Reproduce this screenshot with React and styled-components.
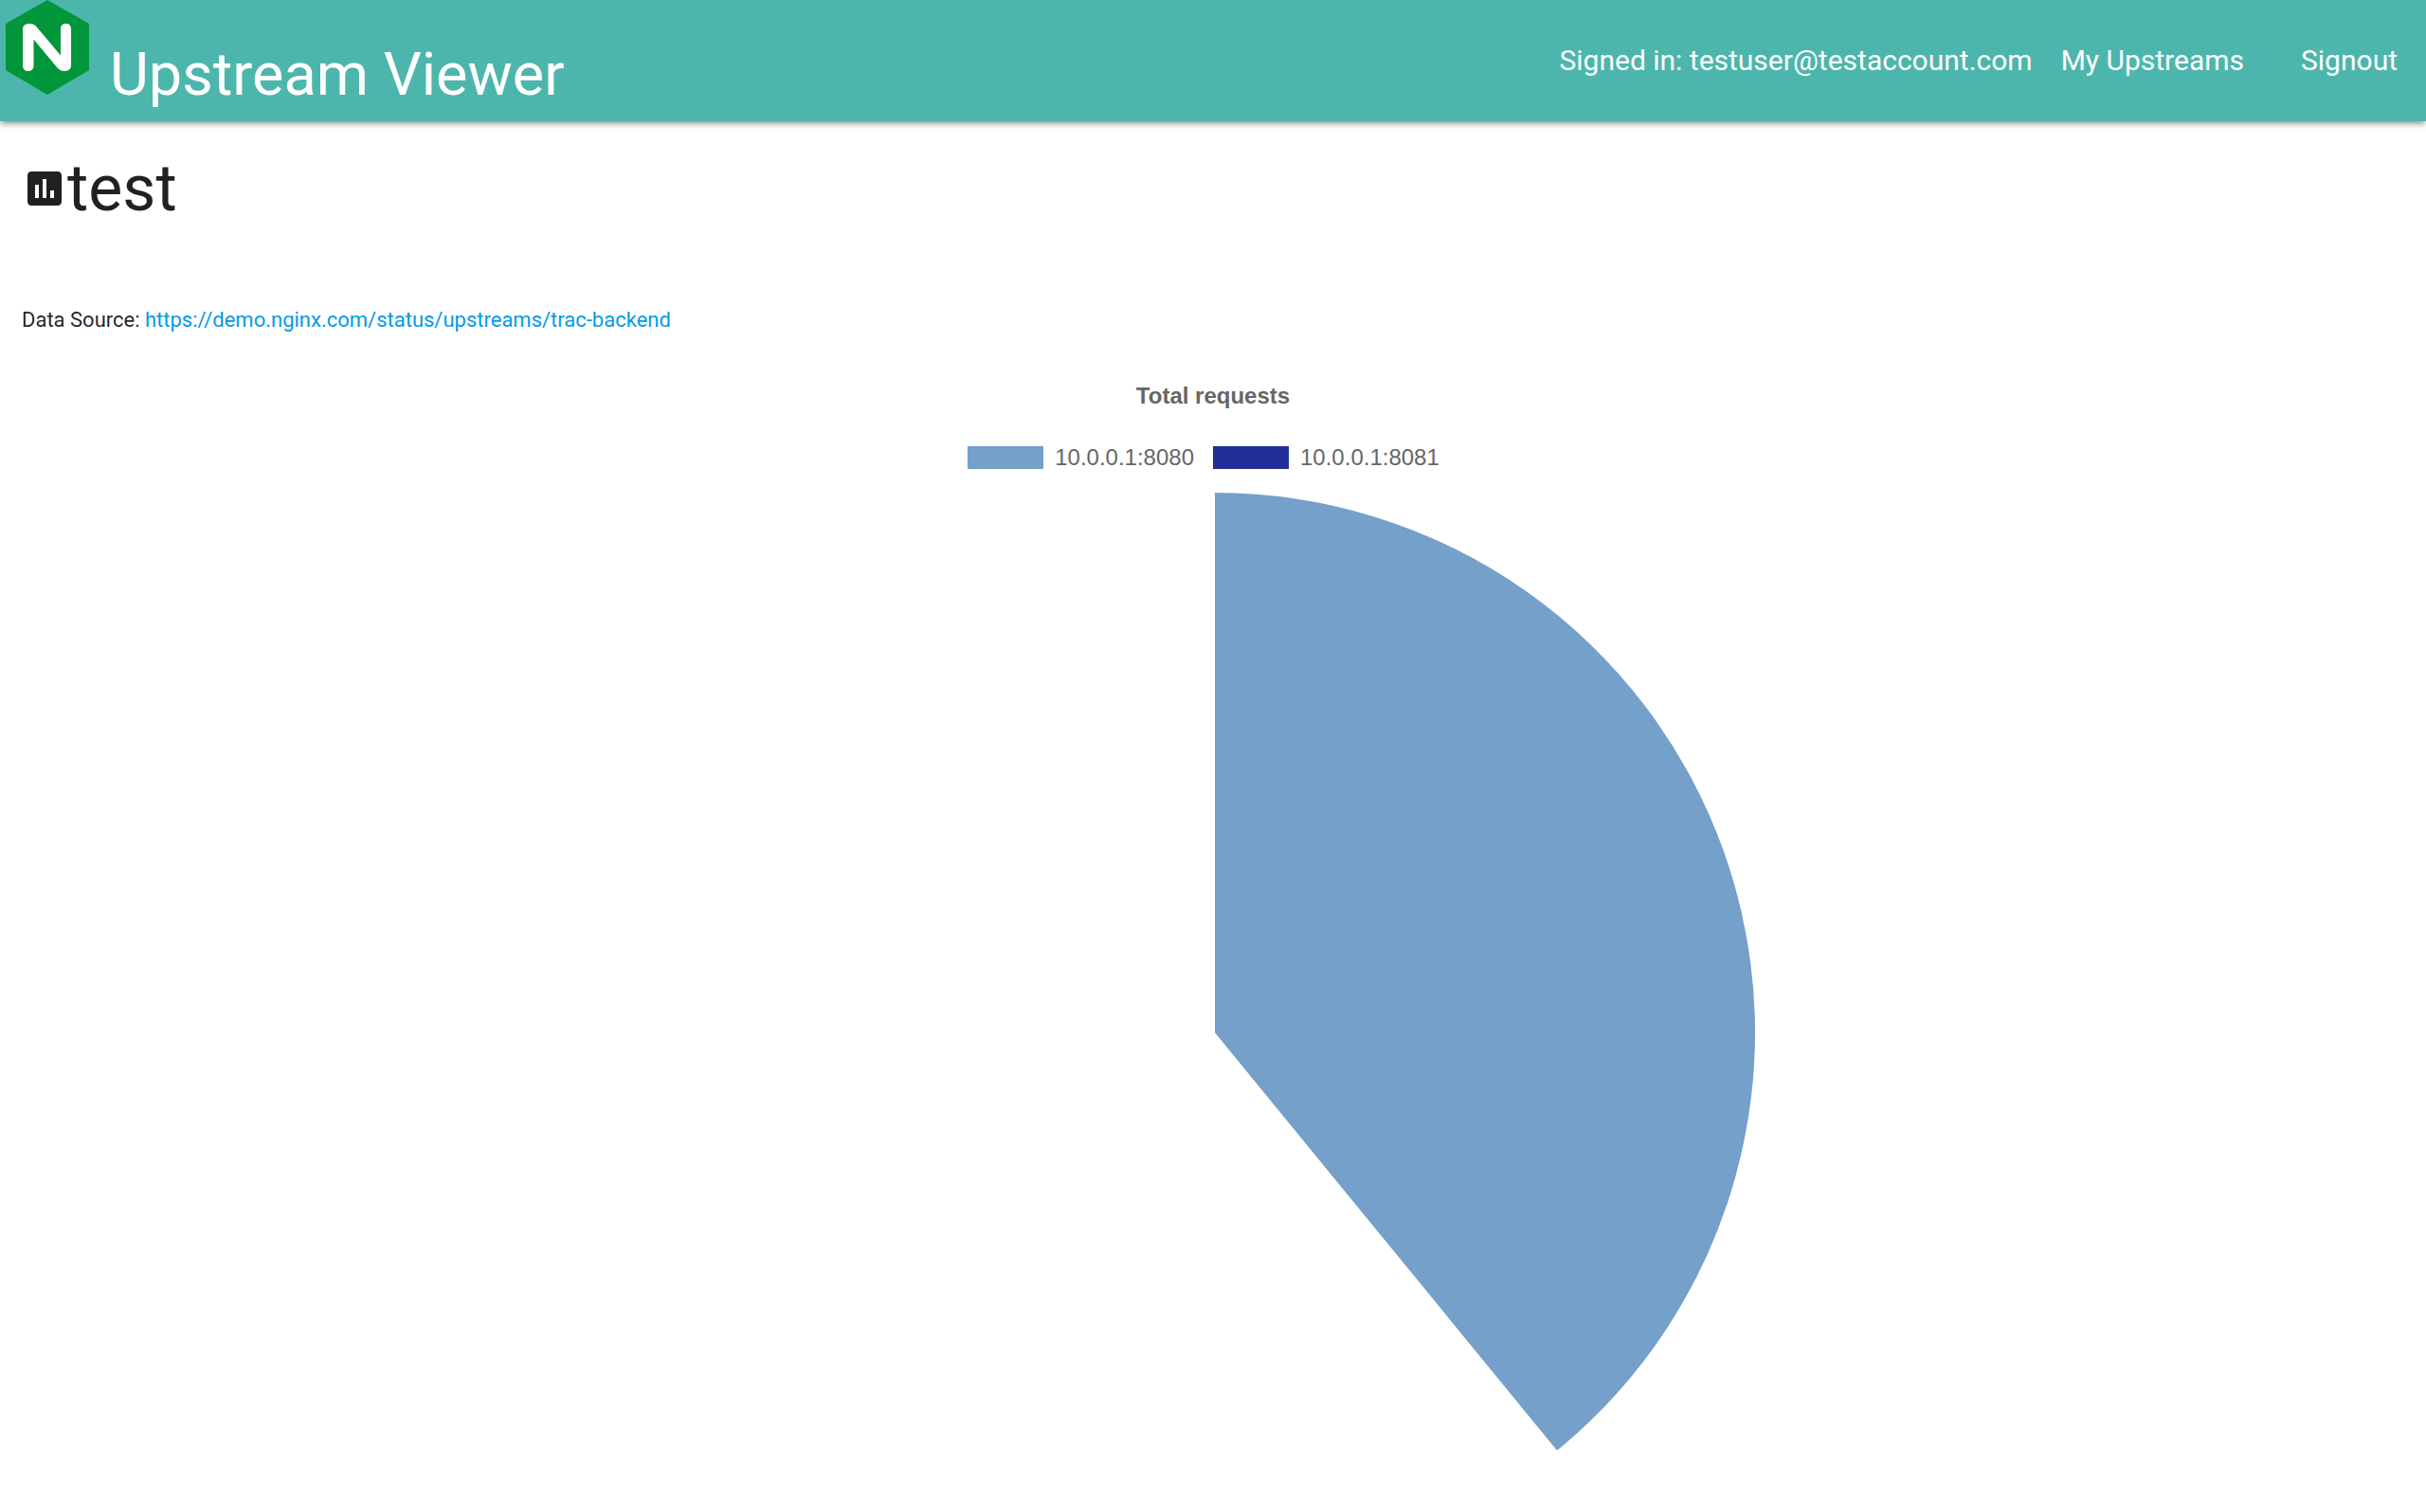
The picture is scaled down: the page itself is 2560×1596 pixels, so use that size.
import React from "react";
import styled, { createGlobalStyle } from "styled-components";

const GlobalStyle = createGlobalStyle`
  *, *::before, *::after { box-sizing: border-box; }
  body {
    margin: 0;
    background: #fff;
    color: rgba(0, 0, 0, 0.87);
    font-family: Roboto, "Liberation Sans", sans-serif;
    font-size: 22px;
  }
`;

const NavBar = styled.header`
  display: flex;
  justify-content: space-between;
  height: 128px;
  background: #4db6ac;
  color: #fff;
  box-shadow: 0 4px 4px 0 rgba(0, 0, 0, 0.14), 0 6px 2px -4px rgba(0, 0, 0, 0.12),
    0 2px 10px 0 rgba(0, 0, 0, 0.2);
`;

const Brand = styled.a`
  display: flex;
  align-items: baseline;
  gap: 16px;
  color: inherit;
  font-size: 63px;
  line-height: 80px;
  text-decoration: none;
  white-space: nowrap;
`;

const Logo = styled.svg`
  flex: none;
  width: 100px;
  height: 100px;
`;

const NavLinks = styled.nav`
  display: flex;
  align-items: center;
  font-size: 30px;
  line-height: 128px;
  white-space: nowrap;
`;

const NavLink = styled.a`
  padding: 0 30px;
  color: inherit;
  text-decoration: none;
`;

const Heading = styled.h1`
  display: flex;
  align-items: center;
  margin: 31px 23px 83px;
  font-size: 68px;
  font-weight: 400;
  line-height: 80px;
`;

const HeadingIcon = styled.svg`
  width: 48px;
  height: 48px;
  fill: currentColor;
`;

const Source = styled.p`
  margin: 0 23px;
  line-height: 32px;
`;

const SourceLink = styled.a`
  color: #039be5;
  text-decoration: none;
`;

const Chart = styled.figure`
  margin: 52px 0 0;
  color: #666;
  font-family: "Liberation Sans", Arial, sans-serif;
  font-size: 24px;
  line-height: 24px;
`;

const ChartTitle = styled.figcaption`
  font-weight: 700;
  text-align: center;
`;

const Legend = styled.ul`
  display: flex;
  justify-content: center;
  margin: 41px 0 25px;
  padding: 0;
  list-style: none;
`;

const LegendItem = styled.li`
  display: flex;
  gap: 12px;
  margin-right: 20px;
`;

const Swatch = styled.span`
  width: 80px;
  height: 24px;
  background: ${(p) => p.$color};
`;

const Plot = styled.svg`
  display: block;
  width: 100%;
`;

const SERIES = [
  { label: "10.0.0.1:8080", color: "#74a0ca" },
  { label: "10.0.0.1:8081", color: "#232f98" },
];

const CENTER = { x: 1282, y: 570 };
const RADIUS = 570;
const SWEEP = (140.7 * Math.PI) / 180;

function slicePath() {
  const x = CENTER.x + RADIUS * Math.sin(SWEEP);
  const y = CENTER.y - RADIUS * Math.cos(SWEEP);
  return `M${CENTER.x} ${CENTER.y}V0A${RADIUS} ${RADIUS} 0 0 1 ${x} ${y}Z`;
}

export default function App() {
  return (
    <>
      <GlobalStyle />
      <NavBar>
        <Brand href="#">
          <Logo viewBox="0 0 100 100" aria-hidden="true">
            <path d="M50 0L94 25V74L50 100L6 74V25Z" fill="#009639" />
            <path
              d="M24 31C24 27 27 25 31 25C35 25 37 26 40 30L64 58.500V30.500C64 27 66 25 69.500 25C73 25 75 27 75 30.500V69C75 73 72 75 68 75C65 75 62 73.500 60 71L35.500 41.500V69.500C35.500 73 33 75 30 75C26.500 75 24 73 24 69.500Z"
              fill="#fff"
            />
          </Logo>
          Upstream Viewer
        </Brand>
        <NavLinks>
          <span>Signed in: testuser@testaccount.com</span>
          <NavLink href="#upstreams">My Upstreams</NavLink>
          <NavLink href="#signout">Signout</NavLink>
        </NavLinks>
      </NavBar>
      <main>
        <Heading>
          <HeadingIcon viewBox="0 0 24 24" aria-hidden="true">
            <path d="M19 3H5c-1.100 0-2 .9-2 2v14c0 1.100.9 2 2 2h14c1.100 0 2-.9 2-2V5c0-1.100-.9-2-2-2zM9 17H7v-7h2v7zm4 0h-2V7h2v10zm4 0h-2v-4h2v4z" />
          </HeadingIcon>
          test
        </Heading>
        <Source>
          Data Source:{" "}
          <SourceLink href="https://demo.nginx.com/status/upstreams/trac-backend">
            https://demo.nginx.com/status/upstreams/trac-backend
          </SourceLink>
        </Source>
        <Chart>
          <ChartTitle>Total requests</ChartTitle>
          <Legend>
            {SERIES.map((s) => (
              <LegendItem key={s.label}>
                <Swatch $color={s.color} />
                {s.label}
              </LegendItem>
            ))}
          </Legend>
          <Plot viewBox="0 0 2560 1040" role="img" aria-label="Total requests">
            <path d={slicePath()} fill={SERIES[0].color} />
          </Plot>
        </Chart>
      </main>
    </>
  );
}
